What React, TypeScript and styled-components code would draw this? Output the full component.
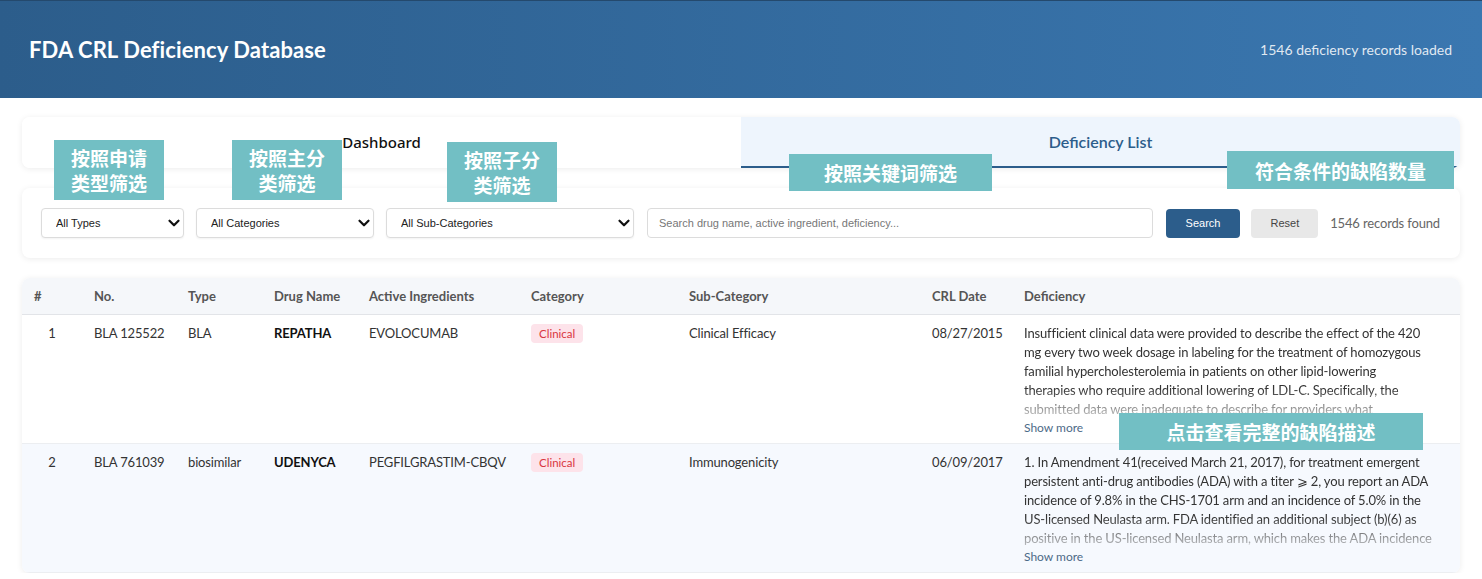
import styled, { createGlobalStyle } from "styled-components";
import { ChevronDown } from "lucide-react";

const GlobalStyle = createGlobalStyle`
  body {
    margin: 0;
    background: #ffffff;
    font-family: Lato, "Noto Sans", sans-serif;
    color: #333;
  }
`;

const Header = styled.header`
  height: 97px;
  border-top: 1px solid #24496d;
  background: linear-gradient(90deg, #2c5d8b 0%, #3a77b0 100%);
  display: flex;
  align-items: center;
  justify-content: space-between;
  padding: 0 30px 0 29px;
`;

const Title = styled.h1`
  margin: 0;
  font-size: 22px;
  font-weight: 700;
  color: #fff;
  letter-spacing: 0.1px;
`;

const Loaded = styled.span`
  font-size: 14px;
  color: rgba(255, 255, 255, 0.86);
`;

const Main = styled.main`
  position: relative;
  padding: 19px 22px 0;
  display: flex;
  flex-direction: column;
  gap: 20px;
`;

const Card = styled.section`
  background: #fff;
  border-radius: 8px;
  box-shadow: 0 1px 6px rgba(0, 0, 0, 0.08);
  overflow: hidden;
`;

const Tabs = styled(Card)`
  display: grid;
  grid-template-columns: 1fr 1fr;
  height: 51px;
`;

const Tab = styled.div<{ $active?: boolean }>`
  display: flex;
  align-items: center;
  justify-content: center;
  font-size: ${(p) => (p.$active ? 16 : 15)}px;
  font-weight: ${(p) => (p.$active ? 600 : 500)};
  color: ${(p) => (p.$active ? "#2c5d8b" : "#111")};
  background: ${(p) => (p.$active ? "#eef5fd" : "#fff")};
  border-bottom: 2px solid ${(p) => (p.$active ? "#2c5d8b" : "transparent")};
  font-family: ${(p) => (p.$active ? "Lato" : '"Noto Sans"')}, sans-serif;
`;

const Filters = styled(Card)`
  display: flex;
  align-items: center;
  gap: 12px;
  padding: 20px 20px 20px 19px;
`;

const SelectWrap = styled.div<{ $w: number }>`
  position: relative;
  width: ${(p) => p.$w}px;
  flex: none;
  svg {
    position: absolute;
    right: 1px;
    top: 6px;
    pointer-events: none;
  }
`;

const Select = styled.select`
  appearance: none;
  width: 100%;
  height: 30px;
  border: 1px solid #dcdcdc;
  border-radius: 4px;
  background: #fff;
  padding: 0 24px 0 14px;
  font-family: "Liberation Sans", Arial, sans-serif;
  font-size: 11px;
  color: #222;
  box-shadow: 0 1px 2px rgba(0, 0, 0, 0.05);
`;

const SearchInput = styled.input`
  flex: 1;
  height: 30px;
  box-sizing: border-box;
  border: 1px solid #dcdcdc;
  border-radius: 4px;
  padding: 0 11px;
  font-family: "Liberation Sans", Arial, sans-serif;
  font-size: 11px;
  margin-left: 1px;
  &::placeholder {
    color: #777;
  }
`;

const Button = styled.button<{ $primary?: boolean }>`
  height: 29px;
  border: none;
  border-radius: 4px;
  font-family: "Liberation Sans", Arial, sans-serif;
  font-size: 11px;
  padding: 0 ${(p) => (p.$primary ? 20 : 19)}px;
  color: ${(p) => (p.$primary ? "#fff" : "#444")};
  background: ${(p) => (p.$primary ? "#2c5d8b" : "#e8e8e8")};
  margin-left: ${(p) => (p.$primary ? 1 : -1)}px;
`;

const Found = styled.span`
  font-size: 13px;
  color: #666;
  white-space: nowrap;
  letter-spacing: -0.15px;
`;

const Table = styled.table`
  width: 100%;
  border-collapse: collapse;
  table-layout: fixed;
`;

const Th = styled.th`
  height: 36px;
  padding: 0 12px;
  text-align: left;
  font-size: 13px;
  font-weight: 700;
  color: #555;
  background: #f5f7fa;
  border-bottom: 1px solid #e2e4e8;
  white-space: nowrap;
`;

const Tr = styled.tr<{ $alt?: boolean }>`
  background: ${(p) => (p.$alt ? "#f6f9fe" : "#fff")};
  border-bottom: 1px solid #eceef1;
`;

const Td = styled.td<{ $center?: boolean; $bold?: boolean }>`
  vertical-align: top;
  padding: 9px 12px 7px;
  font-size: 13px;
  line-height: 19px;
  white-space: nowrap;
  color: ${(p) => (p.$bold ? "#111" : "#333")};
  font-weight: ${(p) => (p.$bold ? 700 : 400)};
  text-align: ${(p) => (p.$center ? "center" : "left")};
  letter-spacing: -0.15px;
`;

const Badge = styled.span`
  display: inline-block;
  font-size: 11.5px;
  line-height: 19px;
  padding: 0 8px;
  border-radius: 4px;
  background: #fde3ea;
  color: #d9363e;
  letter-spacing: 0;
`;

const Deficiency = styled.div`
  height: 95px;
  overflow: hidden;
  -webkit-mask-image: linear-gradient(to bottom, #000 68%, rgba(0, 0, 0, 0.25) 100%);
  mask-image: linear-gradient(to bottom, #000 68%, rgba(0, 0, 0, 0.25) 100%);
`;

const Line = styled.div`
  white-space: nowrap;
`;

const ShowMore = styled.button`
  display: block;
  border: none;
  background: none;
  padding: 0;
  font-family: inherit;
  font-size: 12px;
  line-height: 17px;
  color: #4d6a88;
`;

const Note = styled.div<{ $x: number; $y: number; $w: number; $h: number }>`
  position: absolute;
  left: ${(p) => p.$x}px;
  top: ${(p) => p.$y}px;
  width: ${(p) => p.$w}px;
  height: ${(p) => p.$h}px;
  background: #72bfc4;
  color: #fff;
  font-family: "Noto Sans CJK SC", sans-serif;
  font-weight: 700;
  font-size: 19px;
  line-height: 25px;
  display: flex;
  align-items: center;
  justify-content: center;
  text-align: center;
  white-space: pre-line;
`;

const cols = [60, 94, 86, 95, 162, 158, 243, 92];

const rows = [
  {
    n: 1,
    no: "BLA 125522",
    type: "BLA",
    drug: "REPATHA",
    ingredient: "EVOLOCUMAB",
    category: "Clinical",
    sub: "Clinical Efficacy",
    date: "08/27/2015",
    lines: [
      "Insufficient clinical data were provided to describe the effect of the 420",
      "mg every two week dosage in labeling for the treatment of homozygous",
      "familial hypercholesterolemia in patients on other lipid-lowering",
      "therapies who require additional lowering of LDL-C. Specifically, the",
      "submitted data were inadequate to describe for providers what",
      "dosage adjustments may be needed for these patients.",
    ],
  },
  {
    n: 2,
    no: "BLA 761039",
    type: "biosimilar",
    drug: "UDENYCA",
    ingredient: "PEGFILGRASTIM-CBQV",
    category: "Clinical",
    sub: "Immunogenicity",
    date: "06/09/2017",
    lines: [
      "1. In Amendment 41(received March 21, 2017), for treatment emergent",
      "persistent anti-drug antibodies (ADA) with a titer ⩾ 2, you report an ADA",
      "incidence of 9.8% in the CHS-1701 arm and an incidence of 5.0% in the",
      "US-licensed Neulasta arm. FDA identified an additional subject (b)(6) as",
      "positive in the US-licensed Neulasta arm, which makes the ADA incidence",
      "5.5% in that arm.",
    ],
  },
];

const notes = [
  { x: 54, y: 42, w: 110, h: 60, t: "按照申请\n类型筛选" },
  { x: 232, y: 42, w: 110, h: 60, t: "按照主分\n类筛选" },
  { x: 447, y: 44, w: 110, h: 60, t: "按照子分\n类筛选" },
  { x: 789, y: 56, w: 203, h: 37, t: "按照关键词筛选" },
  { x: 1227, y: 53, w: 227, h: 38, t: "符合条件的缺陷数量" },
  { x: 1119, y: 315, w: 304, h: 37, t: "点击查看完整的缺陷描述" },
];

export default function App() {
  return (
    <>
      <GlobalStyle />
      <Header>
        <Title>FDA CRL Deficiency Database</Title>
        <Loaded>1546 deficiency records loaded</Loaded>
      </Header>
      <Main>
        <Tabs>
          <Tab>Dashboard</Tab>
          <Tab $active>Deficiency List</Tab>
        </Tabs>
        <Filters>
          <SelectWrap $w={143}>
            <Select defaultValue="">
              <option value="">All Types</option>
            </Select>
            <ChevronDown size={18} strokeWidth={3} color="#111" />
          </SelectWrap>
          <SelectWrap $w={178}>
            <Select defaultValue="">
              <option value="">All Categories</option>
            </Select>
            <ChevronDown size={18} strokeWidth={3} color="#111" />
          </SelectWrap>
          <SelectWrap $w={248}>
            <Select defaultValue="">
              <option value="">All Sub-Categories</option>
            </Select>
            <ChevronDown size={18} strokeWidth={3} color="#111" />
          </SelectWrap>
          <SearchInput placeholder="Search drug name, active ingredient, deficiency..." />
          <Button $primary>Search</Button>
          <Button>Reset</Button>
          <Found>1546 records found</Found>
        </Filters>
        <Card>
          <Table>
            <colgroup>
              {cols.map((w, i) => (
                <col key={i} style={{ width: w }} />
              ))}
              <col />
            </colgroup>
            <thead>
              <tr>
                <Th>#</Th>
                <Th>No.</Th>
                <Th>Type</Th>
                <Th>Drug Name</Th>
                <Th>Active Ingredients</Th>
                <Th>Category</Th>
                <Th>Sub-Category</Th>
                <Th>CRL Date</Th>
                <Th>Deficiency</Th>
              </tr>
            </thead>
            <tbody>
              {rows.map((r, i) => (
                <Tr key={r.n} $alt={i % 2 === 1}>
                  <Td $center>{r.n}</Td>
                  <Td>{r.no}</Td>
                  <Td>{r.type}</Td>
                  <Td $bold>{r.drug}</Td>
                  <Td>{r.ingredient}</Td>
                  <Td>
                    <Badge>{r.category}</Badge>
                  </Td>
                  <Td>{r.sub}</Td>
                  <Td>{r.date}</Td>
                  <Td>
                    <Deficiency>
                      {r.lines.map((l) => (
                        <Line key={l}>{l}</Line>
                      ))}
                    </Deficiency>
                    <ShowMore>Show more</ShowMore>
                  </Td>
                </Tr>
              ))}
            </tbody>
          </Table>
        </Card>
        {notes.map((n) => (
          <Note key={n.t} $x={n.x} $y={n.y} $w={n.w} $h={n.h}>
            {n.t}
          </Note>
        ))}
      </Main>
    </>
  );
}
